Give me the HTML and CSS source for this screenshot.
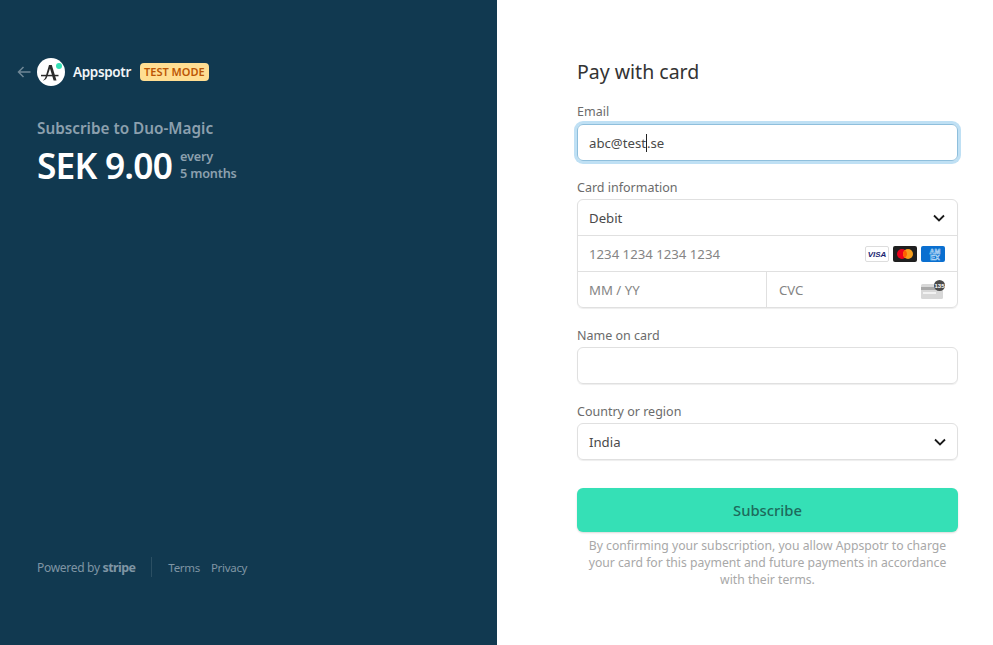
FILE: index.html
```html
<!DOCTYPE html>
<html lang="en">
<head>
<meta charset="utf-8">
<title>Pay with card</title>
<link rel="stylesheet" href="styles.css">
</head>
<body>
<div class="page">
  <aside class="side">
    <div class="side-top">
      <div class="brand">
        <svg class="back" width="14" height="12" viewBox="0 0 14 12"><path d="M13.5 6H1.5M6.5 1L1.5 6l5 5" fill="none" stroke="#6f8796" stroke-width="1.5"/></svg>
        <svg class="logo" width="28" height="28" viewBox="0 0 28 28"><circle cx="14" cy="14" r="14" fill="#fff"/><path d="M5 22.500c1.800-.3 2.600-1.200 3.500-3.500L12 7h2.800l4.700 15.500h-2.900L13 10.500l-3 8.800c-.7 2-1.800 3.200-5 3.200z" fill="#2b2b2b"/><path d="M4 16.800h17.500v1.500H4z" fill="#2b2b2b"/><circle cx="22" cy="8" r="3" fill="#33e0b5"/></svg>
        <span class="brand-name">Appspotr</span>
        <span class="badge">TEST MODE</span>
      </div>
      <div class="summary">
        <div class="sub-title">Subscribe to Duo-Magic</div>
        <div class="price-row">
          <span class="price">SEK 9.00</span>
          <span class="period">every<br>5 months</span>
        </div>
      </div>
    </div>
    <footer class="foot">
      <span class="powered">Powered by <b class="stripe">stripe</b></span>
      <span class="foot-links"><span>Terms</span><span>Privacy</span></span>
    </footer>
  </aside>
  <main class="main">
    <h1 class="title">Pay with card</h1>
    <div class="field">
      <div class="label">Email</div>
      <div class="box focus"><span>abc@test</span><i class="caret"></i><span>.se</span></div>
    </div>
    <div class="field">
      <div class="label">Card information</div>
      <div class="card">
        <div class="row">
          <span class="value">Debit</span>
          <svg class="chev" width="12" height="8" viewBox="0 0 12 8"><path d="M1 1.500l5 5 5-5" fill="none" stroke="#1a1a1a" stroke-width="1.800"/></svg>
        </div>
        <div class="row">
          <span class="ph">1234 1234 1234 1234</span>
          <span class="brands">
            <svg width="24" height="16" viewBox="0 0 24 16"><rect x=".5" y=".5" width="23" height="15" rx="1.500" fill="#fff" stroke="#ddd"/><text x="12" y="11" text-anchor="middle" class="visa">VISA</text></svg>
            <svg width="24" height="16" viewBox="0 0 24 16"><rect width="24" height="16" rx="2" fill="#1f1f1f"/><circle cx="9" cy="8" r="5" fill="#eb001b"/><circle cx="15" cy="8" r="5" fill="#f79e1b"/><path d="M12 4a5 5 0 0 1 0 8 5 5 0 0 1 0-8z" fill="#ff5f00"/></svg>
            <svg width="24" height="16" viewBox="0 0 24 16"><rect width="24" height="16" rx="2" fill="#0a6fd0"/><text x="14" y="7.500" text-anchor="middle" class="amex">AM</text><text x="14" y="14" text-anchor="middle" class="amex">EX</text></svg>
          </span>
        </div>
        <div class="row split">
          <div class="cell"><span class="ph">MM / YY</span></div>
          <div class="cell cvc">
            <span class="ph">CVC</span>
            <svg class="cvc-icon" width="24" height="19" viewBox="0 0 24 19"><rect x="0" y="4" width="22" height="15" rx="1.500" fill="#d8d8d8"/><rect x="0" y="7" width="22" height="3" fill="#a9a9a9"/><rect x="2" y="12" width="13" height="2" fill="#f2f2f2"/><circle cx="18.500" cy="5.500" r="5.500" fill="#4a4a4a"/><text x="18.500" y="7.500" text-anchor="middle" class="cvc-num">135</text></svg>
          </div>
        </div>
      </div>
    </div>
    <div class="field">
      <div class="label">Name on card</div>
      <div class="box"></div>
    </div>
    <div class="field">
      <div class="label">Country or region</div>
      <div class="box select">
        <span class="value">India</span>
        <svg class="chev" width="12" height="8" viewBox="0 0 12 8"><path d="M1 1.500l5 5 5-5" fill="none" stroke="#1a1a1a" stroke-width="1.800"/></svg>
      </div>
    </div>
    <button class="subscribe" type="button">Subscribe</button>
    <p class="terms">By confirming your subscription, you allow Appspotr to charge your card for this payment and future payments in accordance with their terms.</p>
  </main>
</div>
</body>
</html>
```
FILE: styles.css
```css
* { box-sizing: border-box; }
html, body { margin: 0; height: 100%; }
body {
  font-family: "Noto Sans", "Open Sans", "Liberation Sans", sans-serif;
  background: #fff;
  overflow: hidden;
}
.page { display: flex; height: 645px; }

/* left panel */
.side {
  width: 497px;
  background: #113950;
  padding: 58px 0 0 17px;
  display: flex;
  flex-direction: column;
  justify-content: space-between;
}
.brand { display: flex; align-items: center; height: 28px; }
.back { margin-right: 6px; }
.logo { flex: none; }
.brand-name { margin-left: 8px; color: #f2f5f7; font-size: 13.500px; font-weight: 600; letter-spacing: -0.35px; width: 59px; white-space: nowrap; }
.badge {
  margin-left: 8px;
  background: #ffde92;
  color: #bb5504;
  border-radius: 4px;
  font-size: 11px;
  font-weight: 600;
  line-height: 18px;
  height: 18px;
  padding: 0 4px;
  white-space: nowrap;
}
.summary { margin: 31px 0 0 20px; }
.sub-title { color: #8ca0ae; font-size: 15.300px; font-weight: 600; line-height: 22px; }
.price-row { display: flex; align-items: center; margin-top: 4px; height: 44px; }
.price { color: #fff; font-size: 35.300px; font-weight: 600; letter-spacing: -0.8px; line-height: 44px; }
.period { margin-left: 8px; color: #8ca0ae; font-size: 12.700px; font-weight: 600; line-height: 17px; letter-spacing: -0.2px; }

.foot {
  display: flex;
  align-items: center;
  margin: 0 0 68px 20px;
  height: 20px;
  color: #7f95a4;
  font-size: 12px;
}
.powered { padding-right: 16px; border-right: 1px solid #2b4f63; height: 20px; line-height: 22px; letter-spacing: -0.3px; }
.stripe { font-weight: 700; font-size: 12.500px; letter-spacing: -0.6px; }
.foot-links { display: flex; gap: 11px; margin-left: 16px; font-size: 11.500px; letter-spacing: -0.3px; }

/* right panel */
.main { width: 381px; margin-left: 80px; padding-top: 58px; }
.title { margin: 0; font-size: 19.500px; font-weight: 400; line-height: 27px; color: #333; }
.field { margin-top: 19px; }
.title + .field { margin-top: 18px; margin-bottom: -1px; }
.label { font-size: 12.500px; line-height: 17px; color: #6b6b6b; height: 17px; margin-bottom: 3px; }
.field:first-of-type .label { margin-bottom: 4px; }
.box {
  display: flex;
  align-items: center;
  height: 37px;
  padding: 1px 11px 0;
  border-radius: 6px;
  border: 1px solid #e0e0e0;
  box-shadow: 0 1px 1px rgba(0,0,0,.07);
  font-size: 13.200px;
  color: #4a4a4a;
}
.box.focus {
  padding-top: 0;
  border-color: #8fbfdc;
  box-shadow: 0 0 0 3px #bfe0f4;
}
.caret { width: 1px; height: 18px; background: #222; display: block; }
.select, .row { justify-content: space-between; }
.card {
  border: 1px solid #e0e0e0;
  border-radius: 6px;
  box-shadow: 0 1px 1px rgba(0,0,0,.07);
  font-size: 13.200px;
  color: #4a4a4a;
  height: 109px;
}
.row {
  display: flex;
  align-items: center;
  height: 36px;
  padding: 1px 12px 0 11px;
  border-bottom: 1px solid #e0e0e0;
}
.row.split { padding: 0; border-bottom: 0; }
.cell { flex: 1; height: 100%; display: flex; align-items: center; padding: 0 11px; }
.cell + .cell { border-left: 1px solid #e0e0e0; padding-left: 12px; }
.cvc { justify-content: space-between; padding-right: 12px; }
.ph { color: #858585; }
.brands { display: flex; gap: 4px; }
.visa { font: italic 800 8px "Liberation Sans", sans-serif; fill: #1a1f71; }
.amex { font: 700 7px "Liberation Sans", sans-serif; fill: #0a6fd0; stroke: #cfe6fa; stroke-width: .5px; }
.cvc-num { font: 700 6px "Liberation Sans", sans-serif; fill: #fff; }
.cvc-icon { margin-top: -2px; }

.subscribe {
  display: block;
  width: 100%;
  height: 44px;
  margin-top: 28px;
  border: 0;
  border-radius: 6px;
  background: #35e0b6;
  box-shadow: 0 1px 2px rgba(0,0,0,.15);
  color: #1d6b5c;
  font-family: inherit;
  font-size: 14.800px;
  font-weight: 500;
}
.terms {
  margin: 5px 0 0;
  padding: 0 8px;
  text-align: center;
  font-size: 12.200px;
  line-height: 17px;
  color: #a8a8a8;
}
```
